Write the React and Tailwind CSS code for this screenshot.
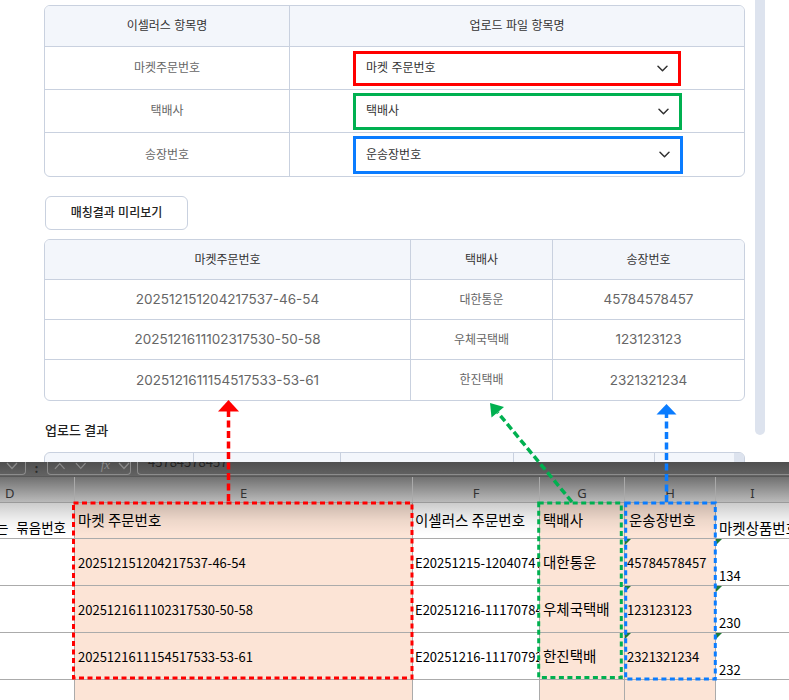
import React from "react";

const mapRows = [
  { label: "마켓주문번호", value: "마켓 주문번호", cls: "border-[#ff0000] w-[328px] h-[35px]" },
  { label: "택배사", value: "택배사", cls: "border-[#00b050] w-[329px] h-[37px]" },
  { label: "송장번호", value: "운송장번호", cls: "border-[#0a7cff] w-[330px] h-[38px]" },
];

const previewRows = [
  ["202512151204217537-46-54", "대한통운", "45784578457"],
  ["202512161110231753" + "0-50-58", "우체국택배", "123123123"],
  ["202512161115451753" + "3-53-61", "한진택배", "2321321234"],
];

const excelRows = [
  ["202512151204217537-46-54", "E20251215-12040747", "대한통운", "45784578457", "134"],
  ["202512161110231753" + "0-50-58", "E20251216-11170784", "우체국택배", "123123123", "230"],
  ["202512161115451753" + "3-53-61", "E20251216-11170792", "한진택배", "2321321234", "232"],
];

function Chevron() {
  return (
    <svg width="11" height="7" viewBox="0 0 11 7" fill="none">
      <path d="M1 1.2 L5.5 5.7 L10 1.2" stroke="#333" strokeWidth="1.5" strokeLinecap="round" strokeLinejoin="round" />
    </svg>
  );
}

function SmallChev({ up = false, color = "#8a8a8a" }) {
  return (
    <svg width="12" height="8" viewBox="0 0 12 8" fill="none">
      <path d={up ? "M1 7 L6 1.5 L11 7" : "M1 1 L6 6.5 L11 1"} stroke={color} strokeWidth="1.3" />
    </svg>
  );
}

function Tri() {
  return (
    <svg width="6" height="6" viewBox="0 0 6 6" className="absolute left-0 top-0">
      <polygon points="0,0 6,0 0,6" fill="#1f7a35" />
    </svg>
  );
}

function WebPart() {
  return (
    <div className="flex h-[462px] overflow-hidden font-['Inter','Noto_Sans_CJK_KR',sans-serif]">
      <div className="w-[755px] shrink-0 pl-[44px] pr-[10px] pt-[5px]">
        {/* mapping table */}
        <div className="overflow-hidden rounded-[6px] border border-[#c9d1df]">
          <div className="grid h-[41px] grid-cols-[245px_1fr] border-b border-[#c9d1df] bg-[#f3f6fb] text-[12px] text-[#333]">
            <div className="flex items-center justify-center border-r border-[#c9d1df]">이셀러스 항목명</div>
            <div className="flex items-center justify-center">업로드 파일 항목명</div>
          </div>
          {mapRows.map((r, i) => (
            <div
              key={r.label}
              className={`grid h-[43px] grid-cols-[245px_1fr] ${i < 2 ? "border-b border-[#c9d1df]" : ""}`}
            >
              <div className="flex items-center justify-center border-r border-[#c9d1df] text-[12px] text-[#666]">
                {r.label}
              </div>
              <div className="flex items-center pl-[63px]">
                <div className={`flex items-center justify-between border-[3px] bg-white pl-[10px] pr-[10px] text-[12px] text-[#333] ${r.cls}`}>
                  <span>{r.value}</span>
                  <Chevron />
                </div>
              </div>
            </div>
          ))}
        </div>

        <button className="ml-[1px] mt-[19px] flex h-[34px] w-[143px] items-center justify-center rounded-[6px] border border-[#c9d1df] bg-white text-[12px] font-medium text-[#222]">
          매칭결과 미리보기
        </button>

        {/* preview table */}
        <div className="mt-[9px] overflow-hidden rounded-[6px] border border-[#c9d1df]">
          <div className="grid h-[40px] grid-cols-[366px_142px_1fr] border-b border-[#c9d1df] bg-[#f3f6fb] text-[12px] text-[#333]">
            <div className="flex items-center justify-center border-r border-[#c9d1df]">마켓주문번호</div>
            <div className="flex items-center justify-center border-r border-[#c9d1df]">택배사</div>
            <div className="flex items-center justify-center">송장번호</div>
          </div>
          {previewRows.map((r, i) => (
            <div
              key={i}
              className={`grid h-[40px] grid-cols-[366px_142px_1fr] text-[#666] ${i < 2 ? "border-b border-[#c9d1df]" : ""}`}
            >
              <div className="flex items-center justify-center border-r border-[#c9d1df] text-[13.5px]">{r[0]}</div>
              <div className="flex items-center justify-center border-r border-[#c9d1df] text-[12px]">{r[1]}</div>
              <div className="flex items-center justify-center text-[13.5px]">{r[2]}</div>
            </div>
          ))}
        </div>

        <div className="mt-[19px] h-[20px] pl-[1px] text-[13px] font-medium leading-[20px] text-[#222]">업로드 결과</div>

        <div className="mt-[12px] grid h-[40px] grid-cols-[149px_147px_173px_141px_1fr] rounded-t-[6px] border border-[#c9d1df] bg-[#f3f6fb]">
          <div className="border-r border-[#c9d1df]" />
          <div className="border-r border-[#c9d1df]" />
          <div className="border-r border-[#c9d1df]" />
          <div className="border-r border-[#c9d1df]" />
          <div className="flex justify-end">
            <div className="h-full w-[10px] rounded-tr-[5px] bg-[#dde3ee]" />
          </div>
        </div>
      </div>
      <div className="h-[435px] w-[10px] shrink-0 rounded-b-[5px] bg-[#dde3ee]" />
    </div>
  );
}

const cols = "grid grid-cols-[75px_338px_127px_85px_91px_1fr]";

function ExcelPart() {
  return (
    <div className="relative h-[238px] overflow-hidden bg-white font-['Noto_Sans_CJK_KR',sans-serif] text-black">
      {/* formula bar */}
      <div className="flex h-[15px] overflow-hidden border-b border-[#585858] bg-[linear-gradient(to_bottom,#4f4f4f,#636363)]">
        <div className="-mt-[12px] flex h-[25px] w-[26px] shrink-0 items-end justify-end rounded-br-[4px] border-b border-r border-[#8c8c8c] pb-[4px] pr-[7px]">
          <SmallChev />
        </div>
        <div className="flex w-[21px] shrink-0 items-start justify-center text-[12px] font-bold leading-[11px] text-[#2a2a2a]">:</div>
        <div className="-mt-[12px] flex h-[25px] w-[84px] shrink-0 items-end rounded-b-[4px] border-x border-b border-[#8c8c8c] pb-[4px] pl-[6px]">
          <SmallChev up />
          <span className="w-[10px]" />
          <SmallChev />
          <span className="ml-[14px] font-['Liberation_Serif',serif] text-[13px] italic leading-[10px] text-[#8a8a8a]">fx</span>
          <span className="ml-[8px]">
            <SmallChev />
          </span>
        </div>
        <div className="w-[6px] shrink-0" />
        <div className="-mr-[10px] -mt-[12px] flex h-[25px] flex-1 items-end rounded-bl-[4px] border-b border-l border-[#8c8c8c] pb-[6px] pl-[10px]">
          <span className="text-[13px] leading-none text-[#222]">45784578457</span>
        </div>
      </div>

      {/* column letters */}
      <div className={`${cols} h-[26px] border-b border-[#9a9a9a] bg-[linear-gradient(to_bottom,#707070,#bababa)] font-['Noto_Sans',sans-serif] text-[13px] leading-none text-[#333]`}>
        <div className="flex items-end border-r border-[#a9a9a9] pb-[2px] pl-[5px]">D</div>
        <div className="flex items-end justify-center border-r border-[#a9a9a9] pb-[2px]">E</div>
        <div className="flex items-end justify-center border-r border-[#a9a9a9] pb-[2px]">F</div>
        <div className="flex items-end justify-center border-r border-[#a9a9a9] pb-[2px]">G</div>
        <div className="flex items-end justify-center border-r border-[#a9a9a9] pb-[2px]">H</div>
        <div className="flex items-end justify-center pb-[2px]">I</div>
      </div>

      {/* header row */}
      <div className={`relative ${cols} h-[36px] border-b border-[#ababab] text-[14.5px] leading-none`}>
        <div className="flex items-end justify-end overflow-hidden whitespace-nowrap border-r border-[#ababab] pb-[4px] pr-[8px] text-[13.5px]">
          <span>는</span>
          <span className="ml-[8px]">묶음번호</span>
        </div>
        <div className="flex items-center border-r border-[#ababab] bg-[#fce4d6] pl-[3px]">마켓 주문번호</div>
        <div className="flex items-center overflow-hidden whitespace-nowrap border-r border-[#ababab] pl-[2px]">이셀러스 주문번호</div>
        <div className="flex items-center border-r border-[#ababab] bg-[#fce4d6] pl-[3px]">택배사</div>
        <div className="flex items-center border-r border-[#ababab] bg-[#fce4d6] pl-[4px]">운송장번호</div>
        <div className="flex items-end overflow-hidden whitespace-nowrap pb-[3px] pl-[3px]">마켓상품번호</div>
        <div className="pointer-events-none absolute inset-0 bg-[linear-gradient(to_bottom,rgba(0,0,0,0.2),rgba(0,0,0,0.06)_50%,rgba(0,0,0,0)_90%)]" />
      </div>

      {excelRows.map((r, i) => (
        <div key={i} className={`${cols} h-[47px] border-b border-[#ababab] text-[13px] leading-none`}>
          <div className="border-r border-[#ababab]" />
          <div className="flex items-center border-r border-[#ababab] bg-[#fce4d6] pl-[3px]">{r[0]}</div>
          <div className="flex items-center overflow-hidden whitespace-nowrap border-r border-[#ababab] pl-[2px]">{r[1]}</div>
          <div className="flex items-center overflow-hidden whitespace-nowrap border-r border-[#ababab] bg-[#fce4d6] pl-[3px] text-[14.5px]">
            {r[2]}
          </div>
          <div className="relative flex items-center border-r border-[#ababab] bg-[#fce4d6] pl-[2px]">
            <Tri />
            {r[3]}
          </div>
          <div className="relative flex items-end pb-[3px] pl-[3px]">
            <Tri />
            {r[4]}
          </div>
        </div>
      ))}

      <div className={`${cols} h-[22px]`}>
        <div className="border-r border-[#ababab]" />
        <div className="border-r border-[#ababab] bg-[#fce4d6]" />
        <div className="border-r border-[#ababab]" />
        <div className="border-r border-[#ababab] bg-[#fce4d6]" />
        <div className="border-r border-[#ababab] bg-[#fce4d6]" />
        <div />
      </div>
    </div>
  );
}

function Annotations() {
  return (
    <svg className="pointer-events-none absolute left-0 top-0" width="789" height="700" viewBox="0 0 789 700">
      <rect x="73.5" y="503" width="338.5" height="175" fill="none" stroke="#ff0000" strokeWidth="3" strokeDasharray="5 3.5" />
      <rect x="538.7" y="503" width="82.6" height="174.5" fill="none" stroke="#00b050" strokeWidth="3" strokeDasharray="5 3.5" />
      <rect x="625.7" y="503" width="89.6" height="176" fill="none" stroke="#0a7cff" strokeWidth="3" strokeDasharray="5 3.5" />

      <line x1="228.5" y1="501" x2="228.5" y2="411" stroke="#ff0000" strokeWidth="3.5" strokeDasharray="7 3.5" />
      <polygon points="228.5,400 218,411.5 239,411.5" fill="#ff0000" />

      <line x1="572" y1="502" x2="497.6" y2="412.3" stroke="#00b050" strokeWidth="3.5" strokeDasharray="7 3.5" />
      <polygon points="490,403 504,407 491.5,417.5" fill="#00b050" />

      <line x1="666.5" y1="502" x2="666.5" y2="414" stroke="#0a7cff" strokeWidth="3.5" strokeDasharray="7 3.5" />
      <polygon points="666.5,404 656.5,414.5 676.5,414.5" fill="#0a7cff" />
    </svg>
  );
}

export default function App() {
  return (
    <div className="relative h-[700px] w-[789px] overflow-hidden bg-white">
      <WebPart />
      <ExcelPart />
      <Annotations />
    </div>
  );
}
